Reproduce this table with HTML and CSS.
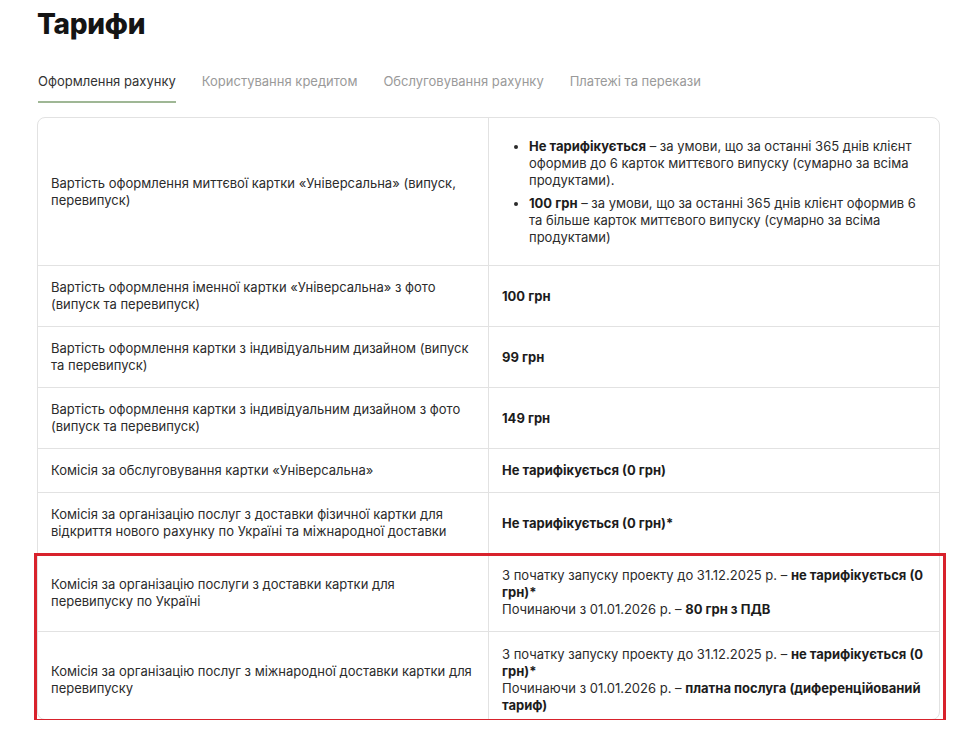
FILE: index.html
```html
<!DOCTYPE html>
<html lang="uk">
<head>
<meta charset="utf-8">
<title>Тарифи</title>
<link rel="stylesheet" href="styles.css">
</head>
<body>
<div class="page">
  <h1 class="title">Тарифи</h1>
  <nav class="tabs">
    <span class="tab active">Оформлення рахунку</span>
    <span class="tab">Користування кредитом</span>
    <span class="tab">Обслуговування рахунку</span>
    <span class="tab">Платежі та перекази</span>
  </nav>
  <div class="table">
    <div class="row">
      <div class="cell">Вартість оформлення миттєвої картки «Універсальна» (випуск, перевипуск)</div>
      <div class="cell">
        <ul class="list">
          <li><b>Не тарифікується</b> – за умови, що за останні 365 днів клієнт оформив до 6 карток миттєвого випуску (сумарно за всіма продуктами).</li>
          <li><b>100 грн</b> – за умови, що за останні 365 днів клієнт оформив 6 та більше карток миттєвого випуску (сумарно за всіма продуктами)</li>
        </ul>
      </div>
    </div>
    <div class="row">
      <div class="cell">Вартість оформлення іменної картки «Універсальна» з фото (випуск та перевипуск)</div>
      <div class="cell"><b>100 грн</b></div>
    </div>
    <div class="row">
      <div class="cell">Вартість оформлення картки з індивідуальним дизайном (випуск та перевипуск)</div>
      <div class="cell"><b>99 грн</b></div>
    </div>
    <div class="row">
      <div class="cell">Вартість оформлення картки з індивідуальним дизайном з фото (випуск та перевипуск)</div>
      <div class="cell"><b>149 грн</b></div>
    </div>
    <div class="row">
      <div class="cell">Комісія за обслуговування картки «Універсальна»</div>
      <div class="cell"><b>Не тарифікується (0 грн)</b></div>
    </div>
    <div class="row">
      <div class="cell">Комісія за організацію послуг з доставки фізичної картки для відкриття нового рахунку по Україні та міжнародної доставки</div>
      <div class="cell"><b>Не тарифікується (0 грн)*</b></div>
    </div>
    <div class="highlight">
      <div class="row">
        <div class="cell">Комісія за організацію послуги з доставки картки для перевипуску по Україні</div>
        <div class="cell"><div>З початку запуску проекту до 31.12.2025 р. – <b>не тарифікується (0 грн)*</b><br>Починаючи з 01.01.2026 р. – <b>80 грн з ПДВ</b></div></div>
      </div>
      <div class="row last">
        <div class="cell">Комісія за організацію послуг з міжнародної доставки картки для перевипуску</div>
        <div class="cell"><div>З початку запуску проекту до 31.12.2025 р. – <b>не тарифікується (0 грн)*</b><br>Починаючи з 01.01.2026 р. – <b>платна послуга (диференційований тариф)</b></div></div>
      </div>
      <span class="marker" aria-hidden="true"></span>
    </div>
  </div>
</div>
</body>
</html>
```
FILE: styles.css
```css
* { box-sizing: border-box; }
html, body { margin: 0; background: #fff; }
body {
  font-family: "Inter", "Noto Sans", sans-serif;
  color: #2b2b2b;
}
.page {
  padding: 6px 20px 0 37px;
}
.title {
  margin: 0;
  font-size: 28px;
  line-height: 36px;
  font-weight: 800;
  color: #141414;
  letter-spacing: -0.3px;
}
.tabs {
  display: flex;
  gap: 26px;
  margin-top: 30px;
  padding-left: 1px;
}
.tab {
  font-size: 13px;
  line-height: 18px;
  color: #9a9a9a;
  padding-bottom: 11px;
  border-bottom: 2px solid transparent;
}
.tab.active {
  color: #333;
  border-bottom-color: #9fb795;
}
.table {
  margin-top: 14px;
  width: 903px;
  border: 1px solid #e2e2e2;
  border-radius: 8px;
  font-size: 13px;
  line-height: 17px;
}
.row {
  display: grid;
  grid-template-columns: 450px 1fr;
}
.table > .row + .row,
.table > .row + .highlight,
.highlight > .row + .row {
  border-top: 1px solid #e2e2e2;
}
.cell {
  padding: 13px 13px;
  display: flex;
  align-items: center;
}
.cell + .cell {
  border-left: 1px solid #e2e2e2;
}
.row.last .cell {
  padding: 14px 13px 5px;
}
b { font-weight: 700; color: #1c1c1c; }
.list {
  margin: 7px 0 6px;
  padding-left: 27px;
}
.list li + li { margin-top: 6px; }
.highlight {
  position: relative;
}
.marker {
  position: absolute;
  z-index: 5;
  left: -4px;
  right: -7px;
  top: -1px;
  bottom: -3px;
  border: 3px solid #d8222c;
  pointer-events: none;
}
```
